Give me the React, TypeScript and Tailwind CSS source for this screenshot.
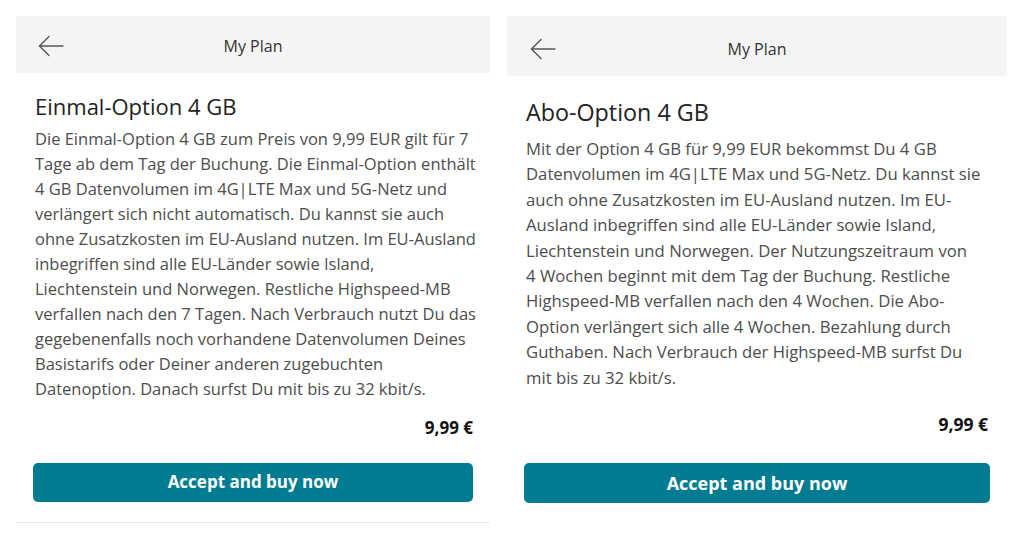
import React from 'react';

interface PlanProps {
    title: string;
    lines: string[];
    compact?: boolean;
}

function BackArrow() {
    return (
        <svg width="26" height="22" viewBox="0 0 26 22" fill="none" stroke="#555" strokeWidth="1.4" strokeLinecap="round" strokeLinejoin="round">
            <path d="M25 11H1.5" />
            <path d="M11 1.5L1.5 11L11 20.5" />
        </svg>
    );
}

function PlanScreen({ title, lines, compact }: PlanProps) {
    return (
        <div className={compact ? 'w-[474px] flex flex-col' : 'w-[500px] flex flex-col'}>
            <div
                className={
                    compact
                        ? 'h-[57px] bg-[#f4f4f4] flex items-center relative px-[22px] pt-[2px]'
                        : 'h-[60px] bg-[#f4f4f4] flex items-center relative px-[23px] pt-[6px]'
                }
            >
                <BackArrow />
                <span className="absolute inset-x-0 text-center text-[16px] text-[#333] pointer-events-none">My Plan</span>
            </div>
            <div className={compact ? 'px-[19px] pt-[18px]' : 'px-[19px] pt-[20px]'}>
                <h1 className={compact ? 'text-[22px] leading-[30px] text-[#222]' : 'text-[23.3px] leading-[32px] text-[#222]'}>{title}</h1>
                <div className={compact ? 'mt-[5px] text-[16.5px] leading-[25px] text-[#4d4d4d]' : 'mt-[8px] text-[16.7px] leading-[25.4px] text-[#4d4d4d]'}>
                    {lines.map((l, i) => (
                        <div key={i} className="whitespace-nowrap">{l}</div>
                    ))}
                </div>
            </div>
            <div className={compact ? 'flex justify-end pr-[17px] mt-[14px]' : 'flex justify-end pr-[19px] mt-[21px]'}>
                <span className={compact ? 'text-[17px] font-bold text-[#111]' : 'text-[17.5px] font-bold text-[#111]'}>9,99 €</span>
            </div>
            <div className={compact ? 'px-[17px] mt-[22px]' : 'px-[17px] mt-[26px]'}>
                <button className={compact ? 'w-full h-[39px] rounded-[5px] bg-[#007c92] text-white text-[17px] font-bold' : 'w-full h-[40px] rounded-[5px] bg-[#007c92] text-white text-[18px] font-bold'}>Accept and buy now</button>
            </div>
            {compact && <div className="mt-[20px] h-px bg-[#ececec]" />}
        </div>
    );
}

const left = [
    'Die Einmal-Option 4 GB zum Preis von 9,99 EUR gilt für 7',
    'Tage ab dem Tag der Buchung. Die Einmal-Option enthält',
    '4 GB Datenvolumen im 4G|LTE Max und 5G-Netz und',
    'verlängert sich nicht automatisch. Du kannst sie auch',
    'ohne Zusatzkosten im EU-Ausland nutzen. Im EU-Ausland',
    'inbegriffen sind alle EU-Länder sowie Island,',
    'Liechtenstein und Norwegen. Restliche Highspeed-MB',
    'verfallen nach den 7 Tagen. Nach Verbrauch nutzt Du das',
    'gegebenenfalls noch vorhandene Datenvolumen Deines',
    'Basistarifs oder Deiner anderen zugebuchten',
    'Datenoption. Danach surfst Du mit bis zu 32 kbit/s.',
];

const right = [
    'Mit der Option 4 GB für 9,99 EUR bekommst Du 4 GB',
    'Datenvolumen im 4G|LTE Max und 5G-Netz. Du kannst sie',
    'auch ohne Zusatzkosten im EU-Ausland nutzen. Im EU-',
    'Ausland inbegriffen sind alle EU-Länder sowie Island,',
    'Liechtenstein und Norwegen. Der Nutzungszeitraum von',
    '4 Wochen beginnt mit dem Tag der Buchung. Restliche',
    'Highspeed-MB verfallen nach den 4 Wochen. Die Abo-',
    'Option verlängert sich alle 4 Wochen. Bezahlung durch',
    'Guthaben. Nach Verbrauch der Highspeed-MB surfst Du',
    'mit bis zu 32 kbit/s.',
];

export default function App() {
    return (
        <div className="w-[1028px] h-[539px] bg-white flex items-start gap-[17px] pl-[16px] pt-[16px] overflow-hidden" style={{ fontFamily: '"Open Sans", Lato, sans-serif' }}>
            <PlanScreen title="Einmal-Option 4 GB" lines={left} compact />
            <PlanScreen title="Abo-Option 4 GB" lines={right} />
        </div>
    );
}
